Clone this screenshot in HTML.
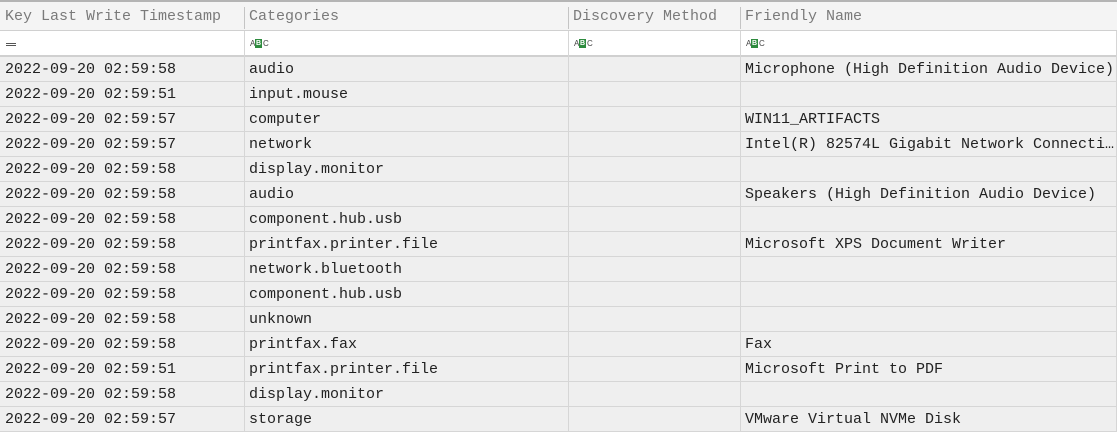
<!DOCTYPE html>
<html><head><style>
*{margin:0;padding:0;box-sizing:border-box}
body{width:1117px;height:432px;overflow:hidden;background:#efefef;font-family:"Liberation Mono",monospace;font-size:15px;position:relative}
.hdr{position:absolute;left:0;top:0;width:1117px;height:31px;background:#f4f4f4;border-top:2px solid #b4b4b4;border-bottom:1px solid #d0d0d0}
.flt{position:absolute;left:0;top:31px;width:1117px;height:26px;background:#fff;border-bottom:2px solid #d0d0d0}
.h{position:absolute;top:6px;color:#7a7a7a;white-space:nowrap}
.sep{position:absolute;top:5px;width:1px;height:22px;background:#c4c4c4}
.abc{position:absolute;top:8px;height:8px;width:18px}
.abc i{position:absolute;top:1px;font-style:normal;font-size:8px;line-height:7px;font-family:"Liberation Sans",sans-serif;color:#444}
.abc b{position:absolute;left:5px;top:0;width:7px;height:9px;background:#2e8b3e;color:#fff;font-size:7px;line-height:9px;text-align:center;font-family:"Liberation Sans",sans-serif}
.row{position:absolute;left:0;width:1117px;height:25px;border-bottom:1px solid #d6d6d6;color:#222;white-space:nowrap}
.row span{position:absolute;top:4px}
.v{position:absolute;top:31px;width:1px;height:401px;background:#d6d6d6}
</style></head><body>
<div class="hdr">
<span class="h" style="left:5px">Key Last Write Timestamp</span>
<div class="sep" style="left:244px"></div>
<span class="h" style="left:249px">Categories</span>
<div class="sep" style="left:568px"></div>
<span class="h" style="left:573px">Discovery Method</span>
<div class="sep" style="left:740px"></div>
<span class="h" style="left:745px">Friendly Name</span>
</div>
<div class="flt">
<span style="position:absolute;left:6px;top:12px;width:10px;height:1px;background:#555"></span>
<span style="position:absolute;left:6px;top:14px;width:10px;height:1px;background:#555"></span>
<span class="abc" style="left:250px"><i style="left:0">A</i><b>B</b><i style="left:13px">C</i></span>
<span class="abc" style="left:574px"><i style="left:0">A</i><b>B</b><i style="left:13px">C</i></span>
<span class="abc" style="left:746px"><i style="left:0">A</i><b>B</b><i style="left:13px">C</i></span>
</div>
<div class="v" style="left:244px"></div>
<div class="v" style="left:568px"></div>
<div class="v" style="left:740px"></div>
<div class="v" style="left:1116px"></div>
<div class="row" style="top:57px"><span style="left:5px">2022-09-20 02:59:58</span><span style="left:249px">audio</span><span style="left:745px">Microphone (High Definition Audio Device)</span></div>
<div class="row" style="top:82px"><span style="left:5px">2022-09-20 02:59:51</span><span style="left:249px">input.mouse</span></div>
<div class="row" style="top:107px"><span style="left:5px">2022-09-20 02:59:57</span><span style="left:249px">computer</span><span style="left:745px">WIN11_ARTIFACTS</span></div>
<div class="row" style="top:132px"><span style="left:5px">2022-09-20 02:59:57</span><span style="left:249px">network</span><span style="left:745px">Intel(R) 82574L Gigabit Network Connecti…</span></div>
<div class="row" style="top:157px"><span style="left:5px">2022-09-20 02:59:58</span><span style="left:249px">display.monitor</span></div>
<div class="row" style="top:182px"><span style="left:5px">2022-09-20 02:59:58</span><span style="left:249px">audio</span><span style="left:745px">Speakers (High Definition Audio Device)</span></div>
<div class="row" style="top:207px"><span style="left:5px">2022-09-20 02:59:58</span><span style="left:249px">component.hub.usb</span></div>
<div class="row" style="top:232px"><span style="left:5px">2022-09-20 02:59:58</span><span style="left:249px">printfax.printer.file</span><span style="left:745px">Microsoft XPS Document Writer</span></div>
<div class="row" style="top:257px"><span style="left:5px">2022-09-20 02:59:58</span><span style="left:249px">network.bluetooth</span></div>
<div class="row" style="top:282px"><span style="left:5px">2022-09-20 02:59:58</span><span style="left:249px">component.hub.usb</span></div>
<div class="row" style="top:307px"><span style="left:5px">2022-09-20 02:59:58</span><span style="left:249px">unknown</span></div>
<div class="row" style="top:332px"><span style="left:5px">2022-09-20 02:59:58</span><span style="left:249px">printfax.fax</span><span style="left:745px">Fax</span></div>
<div class="row" style="top:357px"><span style="left:5px">2022-09-20 02:59:51</span><span style="left:249px">printfax.printer.file</span><span style="left:745px">Microsoft Print to PDF</span></div>
<div class="row" style="top:382px"><span style="left:5px">2022-09-20 02:59:58</span><span style="left:249px">display.monitor</span></div>
<div class="row" style="top:407px"><span style="left:5px">2022-09-20 02:59:57</span><span style="left:249px">storage</span><span style="left:745px">VMware Virtual NVMe Disk</span></div>
</body></html>
